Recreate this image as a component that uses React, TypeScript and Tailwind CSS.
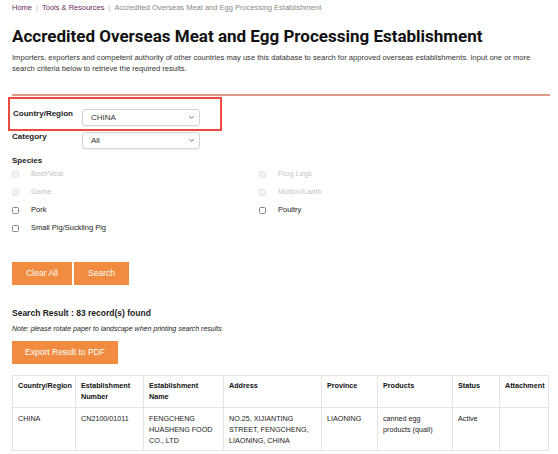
import { ChevronDown } from 'lucide-react'

const species = [
  { left: 'Beef/Veal', right: 'Frog Legs', disabled: true },
  { left: 'Game', right: 'Mutton/Lamb', disabled: true },
  { left: 'Pork', right: 'Poultry', disabled: false },
  { left: 'Small Pig/Suckling Pig', right: '', disabled: false },
]

const columns = [
  { label: 'Country/Region', w: 'w-[63px]' },
  { label: 'Establishment Number', w: 'w-[68px]' },
  { label: 'Establishment Name', w: 'w-[80px]' },
  { label: 'Address', w: 'w-[98px]' },
  { label: 'Province', w: 'w-[56px]' },
  { label: 'Products', w: 'w-[75px]' },
  { label: 'Status', w: 'w-[47px]' },
  { label: 'Attachment', w: 'w-[49px]' },
]

const rows = [
  ['CHINA', 'CN2100/01011', 'FENGCHENG HUASHENG FOOD CO., LTD', 'NO.25, XIJIANTING STREET, FENGCHENG, LIAONING, CHINA', 'LIAONING', 'canned egg products (quail)', 'Active', ''],
]

function Select({ value, className = '' }: { value: string, className?: string }) {
  return (
    <div className={`w-[118px] h-[17px] flex items-center justify-between pl-[8px] pr-[4px] border border-[#d4d4d4] rounded-[3px] bg-white shadow-[0_1px_1px_rgba(0,0,0,0.05)] ${className}`}>
      <span className="text-[8px] text-[#333]">{value}</span>
      <ChevronDown size={7} strokeWidth={3} className="text-[#555]" />
    </div>
  )
}

function Checkbox({ label, disabled }: { label: string, disabled: boolean }) {
  return (
    <div className="flex items-center h-[18px]">
      <span className={`w-[7px] h-[7px] rounded-[1.5px] border ${disabled ? 'border-[#e2e2e2] bg-[#f4f4f4]' : 'border-[#888] bg-white'}`} />
      <span className={`ml-[12px] text-[7.5px] ${disabled ? 'text-[#c4c4c4]' : 'text-[#222]'}`}>{label}</span>
    </div>
  )
}

export default function App() {
  return (
    <div className="w-[558px] h-[454px] overflow-hidden bg-white font-['Liberation_Sans',Arial,sans-serif] text-[#222]">
      <div className="px-[12px] pt-[3px] text-[7.5px] leading-[9px] flex items-center gap-[4px]">
        <span className="text-[#6a2a5b]">Home</span>
        <span className="text-[#bbb]">|</span>
        <span className="text-[#6a2a5b]">Tools &amp; Resources</span>
        <span className="text-[#bbb]">|</span>
        <span className="text-[#888]">Accredited Overseas Meat and Egg Processing Establishment</span>
      </div>

      <h1 className="px-[12px] mt-[13px] font-['Roboto',sans-serif] font-bold text-[17px] leading-[22px] text-[#111]">
        Accredited Overseas Meat and Egg Processing Establishment
      </h1>

      <p className="ml-[12px] w-[530px] mt-[6px] text-[7.6px] leading-[10.5px] text-[#333]">
        Importers, exporters and competent authority of other countries may use this database to search for approved overseas establishments. Input one or more search criteria below to retrieve the required results.
      </p>

      <div className="ml-[12px] mt-[20px] h-[2px] w-[538px] bg-[#dd9a84]" />

      <div className="ml-[8px] mt-[1px] w-[214px] h-[34px] border-2 border-[#ef4a40] flex items-center pl-[3px]">
        <span className="w-[69px] font-bold text-[8px] leading-[10px]">Country/Region</span>
        <Select value="CHINA" className="mt-[7px]" />
      </div>

      <div className="ml-[12px] mt-[1px] flex items-start">
        <span className="w-[70px] font-bold text-[8px] leading-[10px]">Category</span>
        <Select value="All" />
      </div>

      <div className="px-[12px] mt-[7px]">
        <div className="font-bold text-[8px] leading-[10px]">Species</div>
        <div className="mt-[-1px]">
          {species.map((s) => (
            <div key={s.left} className="flex">
              <div className="w-[247px]">
                <Checkbox label={s.left} disabled={s.disabled} />
              </div>
              {s.right && <Checkbox label={s.right} disabled={s.disabled} />}
            </div>
          ))}
        </div>
      </div>

      <div className="px-[12px] mt-[25px] flex gap-[2px]">
        <button className="w-[60px] h-[23px] bg-[#f08b3f] text-white text-[8.5px]">Clear All</button>
        <button className="w-[55px] h-[23px] bg-[#f08b3f] text-white text-[8.5px]">Search</button>
      </div>

      <div className="px-[12px] mt-[23px] font-bold text-[8.5px] leading-[11px]">Search Result : 83 record(s) found</div>
      <div className="px-[12px] mt-[5px] italic text-[7px] leading-[9px]">Note: please rotate paper to landscape when printing search results</div>

      <div className="px-[12px] mt-[5px]">
        <button className="w-[106px] h-[23px] bg-[#f08b3f] text-white text-[8.5px]">Export Result to PDF</button>
      </div>

      <table className="ml-[12px] mt-[11px] w-[536px] table-fixed border-collapse text-[7.2px] leading-[11px]">
        <thead>
          <tr>
            {columns.map((c) => (
              <th key={c.label} className={`${c.w} h-[32px] border border-[#e4e4e4] px-[5px] pt-[4px] align-top text-left font-bold text-[#111]`}>
                {c.label}
              </th>
            ))}
          </tr>
        </thead>
        <tbody>
          {rows.map((r) => (
            <tr key={r[1]}>
              {r.map((cell, i) => (
                <td key={i} className="h-[43px] border border-[#e4e4e4] px-[5px] pt-[5px] align-top text-[#222]">
                  {cell}
                </td>
              ))}
            </tr>
          ))}
        </tbody>
      </table>
    </div>
  )
}
